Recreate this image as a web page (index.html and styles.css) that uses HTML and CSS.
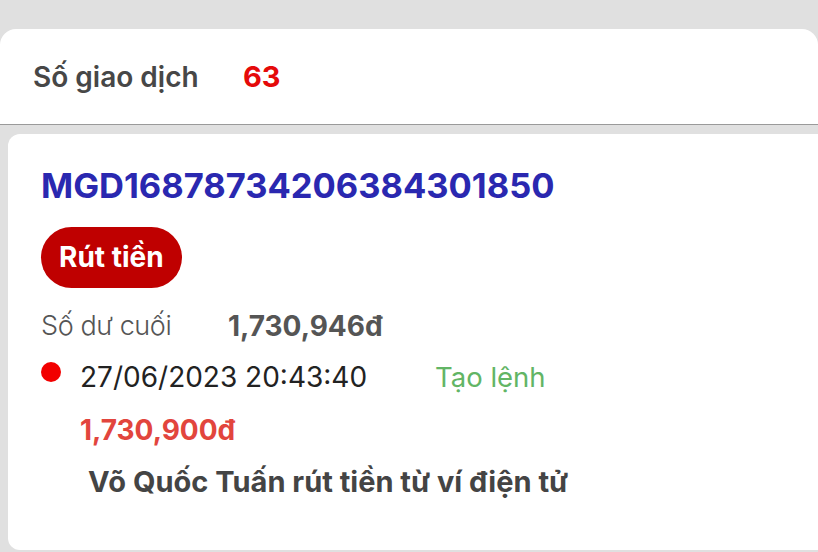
FILE: index.html
```html
<!DOCTYPE html>
<html lang="vi">
<head>
  <meta charset="UTF-8">
  <meta name="viewport" content="width=device-width, initial-scale=1">
  <title>Giao dịch</title>
  <link rel="stylesheet" href="styles.css">
</head>
<body>
  <!-- Summary -->
  <div class="summary">
    <span class="summary-label">Số giao dịch</span>
    <span class="summary-count">63</span>
  </div>

  <!-- Transaction card -->
  <div class="trans-card">
    <h2 class="trans-code">MGD16878734206384301850</h2>
    <span class="trans-type">Rút tiền</span>
    <div class="balance">
      <span class="balance-label">Số dư cuối</span>
      <span class="balance-value">1,730,946đ</span>
    </div>
    <div class="status-row">
      <span class="dot"></span>
      <span class="status-time">27/06/2023 20:43:40</span>
      <span class="status-name">Tạo lệnh</span>
    </div>
    <div class="amount">1,730,900đ</div>
    <div class="note">Võ Quốc Tuấn rút tiền từ ví điện tử</div>
  </div>
</body>
</html>
```

FILE: styles.css
```css
* { box-sizing: border-box; margin: 0; padding: 0; }
html, body {
  height: 100%;
  overflow: hidden;
}
body {
  background: #e0e0e0;
  font-family: Inter, "Noto Sans", sans-serif;
  color: #444;
}

/* Summary bar */
.summary {
  margin-top: 29px;
  height: 96px;
  background: #fff;
  border-radius: 16px 16px 0 0;
  border-bottom: 1px solid #9a9a9a;
  display: flex;
  align-items: center;
  padding: 0 33px;
}
.summary-label {
  width: 210px;
  font-size: 28px;
  font-weight: 600;
  color: #474747;
}
.summary-count {
  font-size: 29px;
  font-weight: 700;
  color: #e50a0a;
}

/* Transaction card */
.trans-card {
  margin: 9px 0 0 8px;
  width: 830px;
  height: 416px;
  background: #fff;
  border-radius: 12px;
  padding: 32px 0 0 33px;
  display: flex;
  flex-direction: column;
  align-items: flex-start;
}
.trans-code {
  font-size: 34.5px;
  font-weight: 700;
  color: #2a28b0;
  line-height: 40px;
}
.trans-type {
  margin-top: 21px;
  height: 61px;
  line-height: 61px;
  padding: 0 18px;
  border-radius: 31px;
  background: #bf0000;
  color: #fff;
  font-size: 28px;
  font-weight: 700;
}
.balance {
  margin-top: 22px;
  display: flex;
  font-size: 28px;
  line-height: 32px;
}
.balance-label {
  width: 187px;
  font-size: 27px;
  font-weight: 300;
  letter-spacing: -0.4px;
  color: #555;
}
.balance-value {
  font-weight: 700;
  color: #555;
}
.status-row {
  margin-top: 19px;
  display: flex;
  align-items: center;
  font-size: 28px;
  line-height: 32px;
}
.dot {
  width: 20px;
  height: 20px;
  border-radius: 50%;
  background: #f20000;
  margin-top: -11px;
  margin-right: 19px;
}
.status-time {
  color: #222;
  width: 355px;
}
.status-name {
  color: #62b565;
  font-size: 27.5px;
}
.amount {
  margin: 21px 0 0 39px;
  font-size: 28px;
  line-height: 32px;
  font-weight: 700;
  color: #e2453d;
}
.note {
  margin: 20px 0 0 47px;
  font-size: 29px;
  line-height: 32px;
  font-weight: 700;
  color: #444;
}
```
